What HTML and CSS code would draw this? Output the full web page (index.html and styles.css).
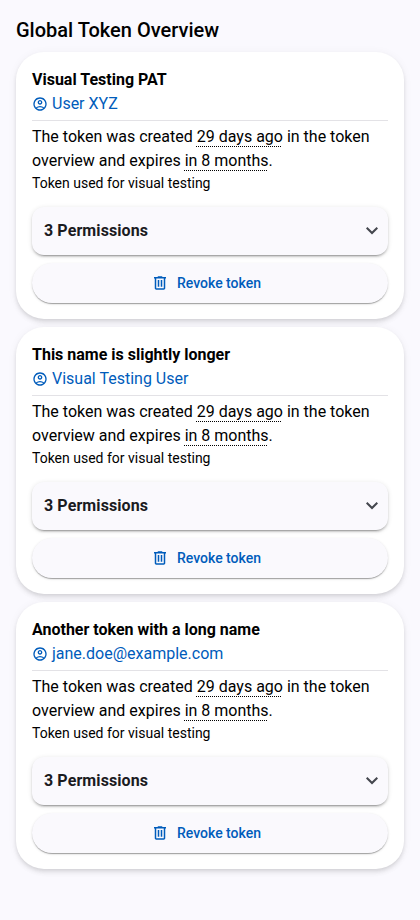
FILE: index.html
```html
<!DOCTYPE html>
<html lang="en">
<head>
<meta charset="utf-8">
<title>Global Token Overview</title>
<link rel="stylesheet" href="styles.css">
</head>
<body>
<svg class="defs" aria-hidden="true">
<symbol id="user" viewBox="0 -960 960 960"><path d="M234-276q51-39 114-61.500T480-360q69 0 132 22.500T726-276q35-41 54.500-93T800-480q0-133-93.500-226.500T480-800q-133 0-226.500 93.500T160-480q0 59 19.500 111t54.500 93Zm246-164q-59 0-99.500-40.500T340-580q0-59 40.500-99.500T480-720q59 0 99.500 40.500T620-580q0 59-40.500 99.500T480-440Zm0 360q-83 0-156-31.500T197-197q-54-54-85.500-127T80-480q0-83 31.500-156T197-763q54-54 127-85.500T480-880q83 0 156 31.500T763-763q54 54 85.500 127T880-480q0 83-31.500 156T763-197q-54 54-127 85.500T480-80Zm0-80q53 0 100-15.500t86-44.500q-39-29-86-44.500T480-280q-53 0-100 15.500T294-220q39 29 86 44.500T480-160Zm0-360q26 0 43-17t17-43q0-26-17-43t-43-17q-26 0-43 17t-17 43q0 26 17 43t43 17Z"/></symbol>
<symbol id="trash" viewBox="0 -960 960 960"><path d="M280-120q-33 0-56.500-23.500T200-200v-520h-40v-80h200v-40h240v40h200v80h-40v520q0 33-23.500 56.500T680-120H280Zm400-600H280v520h400v-520ZM360-280h80v-360h-80v360Zm160 0h80v-360h-80v360Z"/></symbol>
<symbol id="down" viewBox="0 -960 960 960"><path d="M480-345 240-585l56-56 184 184 184-184 56 56-240 240Z"/></symbol>
</svg>
<main>
<h1>Global Token Overview</h1>
<section class="card">
<h2>Visual Testing PAT</h2>
<a class="owner"><svg><use href="#user"/></svg>User XYZ</a>
<hr>
<p class="info">The token was created <span>29 days ago</span> in the token overview and expires <span>in 8 months</span>.</p>
<p class="desc">Token used for visual testing</p>
<div class="panel">3 Permissions<svg><use href="#down"/></svg></div>
<button class="revoke"><svg><use href="#trash"/></svg>Revoke token</button>
</section>
<section class="card">
<h2>This name is slightly longer</h2>
<a class="owner"><svg><use href="#user"/></svg>Visual Testing User</a>
<hr>
<p class="info">The token was created <span>29 days ago</span> in the token overview and expires <span>in 8 months</span>.</p>
<p class="desc">Token used for visual testing</p>
<div class="panel">3 Permissions<svg><use href="#down"/></svg></div>
<button class="revoke"><svg><use href="#trash"/></svg>Revoke token</button>
</section>
<section class="card">
<h2>Another token with a long name</h2>
<a class="owner"><svg><use href="#user"/></svg>jane.doe@example.com</a>
<hr>
<p class="info">The token was created <span>29 days ago</span> in the token overview and expires <span>in 8 months</span>.</p>
<p class="desc">Token used for visual testing</p>
<div class="panel">3 Permissions<svg><use href="#down"/></svg></div>
<button class="revoke"><svg><use href="#trash"/></svg>Revoke token</button>
</section>
</main>
</body>
</html>
```
FILE: styles.css
```css
* { box-sizing: border-box; }
body { margin: 0; background: #faf9fe; color: #000; font: 400 16px/24px Roboto, sans-serif; }
.defs { display: none; }
svg { fill: currentColor; flex: none; }
main { padding: 16px; display: flex; flex-direction: column; gap: 8px; }
h1, h2, p { margin: 0; }
h1 { font-size: 20px; line-height: 28px; font-weight: 500; }
.card { height: 267px; padding: 16px; border-radius: 28px; background: #fff; display: flex; flex-direction: column; box-shadow: 0 2px 4px -1px rgba(0,0,0,.1), 0 4px 5px rgba(0,0,0,.06), 0 1px 10px rgba(0,0,0,.05); }
h2 { font-size: 16px; line-height: 24px; font-weight: 700; }
.owner { display: flex; align-items: center; gap: 4px; color: #005cbb; }
.owner svg { width: 16px; height: 16px; }
hr { width: 100%; margin: 4px 0; border: 0; border-top: 1px solid #e3e2e6; }
.info span { text-decoration: underline dotted 1px; text-underline-offset: 4px; text-decoration-skip-ink: none; }
.desc { font-size: 14px; line-height: 20px; }
.panel { height: 48px; margin-top: 14px; padding: 0 4px 0 12px; display: flex; align-items: center; justify-content: space-between; flex: none; border-radius: 12px; background: #faf9fd; color: #1a1b1f; font-weight: 700; letter-spacing: 0.096px; box-shadow: 0 3px 1px -2px rgba(0,0,0,.2), 0 2px 2px rgba(0,0,0,.14), 0 1px 5px rgba(0,0,0,.12); }
.panel svg { width: 24px; height: 24px; color: #44474e; }
.revoke { height: 40px; margin-top: 8px; padding: 0 8px 0 0; border: 0; border-radius: 20px; display: flex; flex: none; align-items: center; justify-content: center; gap: 8px; background: #faf9fd; color: #005cbb; font: 500 14px/20px Roboto, sans-serif; box-shadow: 0 2px 1px -1px rgba(0,0,0,.2), 0 1px 1px rgba(0,0,0,.14), 0 1px 3px rgba(0,0,0,.12); }
.revoke svg { width: 18px; height: 18px; }
```
